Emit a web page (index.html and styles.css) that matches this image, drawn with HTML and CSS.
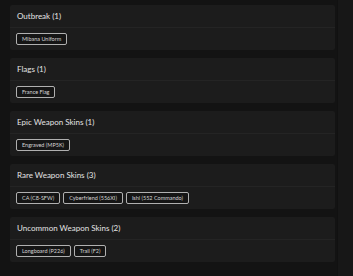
FILE: index.html
```html
<!DOCTYPE html>
<html lang="en">
  <head>
    <meta charset="UTF-8" />
    <meta name="viewport" content="width=device-width, initial-scale=1.0" />
    <title>Unlocks</title>
    <link rel="stylesheet" href="styles.css">
  </head>
  <body>
    <main class="unlocks">
      <section class="group">
        <h2 class="group-title">Outbreak (1)</h2>
        <div class="chips">
          <span class="chip">Mibana Uniform</span>
        </div>
      </section>

      <section class="group">
        <h2 class="group-title">Flags (1)</h2>
        <div class="chips">
          <span class="chip">France Flag</span>
        </div>
      </section>

      <section class="group">
        <h2 class="group-title">Epic Weapon Skins (1)</h2>
        <div class="chips">
          <span class="chip">Engraved (MP5K)</span>
        </div>
      </section>

      <section class="group">
        <h2 class="group-title">Rare Weapon Skins (3)</h2>
        <div class="chips">
          <span class="chip">CA (C8-SFW)</span>
          <span class="chip">Cyberfriend (556XI)</span>
          <span class="chip">Ishi (552 Commando)</span>
        </div>
      </section>

      <section class="group">
        <h2 class="group-title">Uncommon Weapon Skins (2)</h2>
        <div class="chips">
          <span class="chip">Longboard (P226)</span>
          <span class="chip">Trail (F2)</span>
        </div>
      </section>
    </main>
    <aside class="rail"></aside>
  </body>
</html>
```

FILE: styles.css
```css
body {
  font-family: Lato, "Open Sans", sans-serif;
  background: #131313;
  color: #e2e2e2;
  margin: 0;
  height: 276px;
  display: flex;
  overflow: hidden;
}

.unlocks {
  flex: 1;
  padding: 5px 2px 0 10px;
  display: flex;
  flex-direction: column;
  gap: 8px;
}

.rail {
  width: 15px;
  background: #171717;
  border-left: 1px solid #111;
}

.group {
  background: #1c1c1c;
  border-radius: 2px;
  height: 45px;
  box-sizing: border-box;
  display: flex;
  flex-direction: column;
}

.group-title {
  margin: 0;
  height: 23px;
  box-sizing: border-box;
  padding: 0 7px;
  display: flex;
  align-items: center;
  font-size: 8px;
  font-weight: 400;
  color: #e4e4e4;
  border-bottom: 1px solid #242424;
}

.chips {
  flex: 1;
  display: flex;
  align-items: center;
  gap: 3px;
  padding: 0 6px;
}

.chip {
  height: 12px;
  box-sizing: border-box;
  padding: 0 5px;
  display: flex;
  align-items: center;
  font-size: 5.5px;
  color: #d4d4d4;
  background: #151515;
  border: 1px solid #b0b0b0;
  border-radius: 2px;
}
```
